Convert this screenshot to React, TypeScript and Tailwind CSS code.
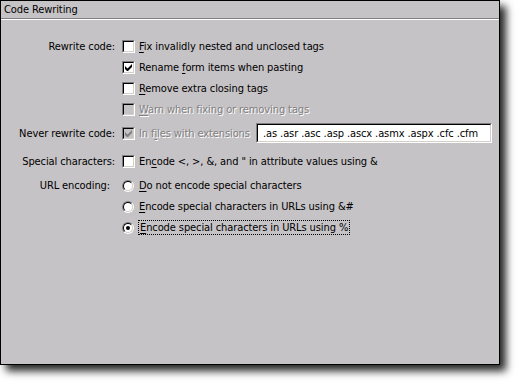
import React from 'react';

const font = { fontFamily: '"DejaVu Sans Condensed", "DejaVu Sans", sans-serif' };

const U = ({ children }: { children: React.ReactNode }) => <span className="underline underline-offset-[2px]">{children}</span>;

const CheckBox = ({ checked = false, disabled = false }: { checked?: boolean; disabled?: boolean }) => (
  <div className="w-[13px] h-[13px] shrink-0 border border-t-[#808080] border-l-[#808080] border-r-white border-b-white">
    <div
      className={`w-full h-full border border-t-black border-l-black border-r-[#d4d0c8] border-b-[#d4d0c8] flex items-center justify-center ${
        disabled ? 'bg-[#c6c3c6]' : 'bg-white'
      }`}
    >
      {checked && (
        <svg width="7" height="7" viewBox="0 0 7 7">
          <path d="M0 2v3l2 2h1l4-4V0L2.5 4.5z" fill={disabled ? '#808080' : '#000'} />
        </svg>
      )}
    </div>
  </div>
);

const Radio = ({ checked = false }: { checked?: boolean }) => (
  <div className="w-[12px] h-[12px] shrink-0 rounded-full border border-t-[#808080] border-l-[#808080] border-r-white border-b-white -rotate-0">
    <div className="w-full h-full rounded-full bg-white border border-t-black border-l-black border-r-[#d4d0c8] border-b-[#d4d0c8] flex items-center justify-center">
      {checked && <div className="w-[4px] h-[4px] rounded-full bg-black" />}
    </div>
  </div>
);

const Label = ({ children, extra = '' }: { children: React.ReactNode; extra?: string }) => (
  <div className={`w-[115px] shrink-0 text-right pr-[1px] ${extra}`}>{children}</div>
);

const Spacer = () => <div className="w-[115px] shrink-0" />;

export default function App() {
  return (
    <div className="w-[520px] h-[383px] bg-white" style={font}>
      <div className="w-[500px] h-[365px] bg-[#c6c3c6] border border-black shadow-[6px_6px_8px_rgba(0,0,0,0.85)] text-[11px] text-black leading-[13px] tracking-[-0.1px]">
        <div className="h-[17px] pl-[3px] flex items-center">Code Rewriting</div>
        <div className="h-px bg-[#808080]" />
        <div className="h-px bg-white" />

        <div className="pt-[16px] flex flex-col">
          <div className="h-[21px] flex items-center">
            <Label>Rewrite code:</Label>
            <div className="ml-[6px] flex items-center gap-[4px]">
              <CheckBox />
              <span><U>F</U>ix invalidly nested and unclosed tags</span>
            </div>
          </div>
          <div className="h-[21px] flex items-center">
            <Spacer />
            <div className="ml-[6px] flex items-center gap-[4px]">
              <CheckBox checked />
              <span>Rename <U>f</U>orm items when pasting</span>
            </div>
          </div>
          <div className="h-[21px] flex items-center">
            <Spacer />
            <div className="ml-[6px] flex items-center gap-[4px]">
              <CheckBox />
              <span><U>R</U>emove extra closing tags</span>
            </div>
          </div>
          <div className="h-[21px] flex items-center">
            <Spacer />
            <div className="ml-[6px] flex items-center gap-[4px]">
              <CheckBox disabled />
              <span className="text-[#808080] [text-shadow:1px_1px_0_#fff]"><U>W</U>arn when fixing or removing tags</span>
            </div>
          </div>

          <div className="mt-[3px] h-[20px] flex items-center">
            <Label>Never rewrite code:</Label>
            <div className="ml-[6px] flex items-center gap-[4px]">
              <CheckBox checked disabled />
              <span className="text-[#808080] [text-shadow:1px_1px_0_#fff]">In f<U>i</U>les with extensions</span>
            </div>
            <div className="ml-auto mr-[7px] w-[236px] h-[20px] border border-t-[#808080] border-l-[#808080] border-r-white border-b-white">
              <div className="w-full h-full bg-white border border-t-black border-l-black border-r-[#d4d0c8] border-b-[#d4d0c8] pl-[5px] flex items-center">
                .as .asr .asc .asp .ascx .asmx .aspx .cfc .cfm
              </div>
            </div>
          </div>

          <div className="mt-[8px] h-[21px] flex items-center">
            <Label>Special characters:</Label>
            <div className="ml-[6px] flex items-center gap-[4px]">
              <CheckBox />
              <span>En<U>c</U>ode &lt;, &gt;, &amp;, and &quot; in attribute values using &amp;</span>
            </div>
          </div>

          <div className="mt-[3px] h-[21px] flex items-center">
            <Label extra="pr-[6px]">URL encoding:</Label>
            <div className="ml-[6px] flex items-center gap-[5px]">
              <Radio />
              <span><U>D</U>o not encode special characters</span>
            </div>
          </div>
          <div className="h-[21px] flex items-center">
            <Spacer />
            <div className="ml-[6px] flex items-center gap-[5px]">
              <Radio />
              <span><U>E</U>ncode special characters in URLs using &amp;#</span>
            </div>
          </div>
          <div className="h-[21px] flex items-center">
            <Spacer />
            <div className="ml-[6px] flex items-center gap-[4px]">
              <Radio checked />
              <span className="border border-dotted border-black px-px"><U>E</U>ncode special characters in URLs using %</span>
            </div>
          </div>
        </div>
      </div>
    </div>
  );
}
